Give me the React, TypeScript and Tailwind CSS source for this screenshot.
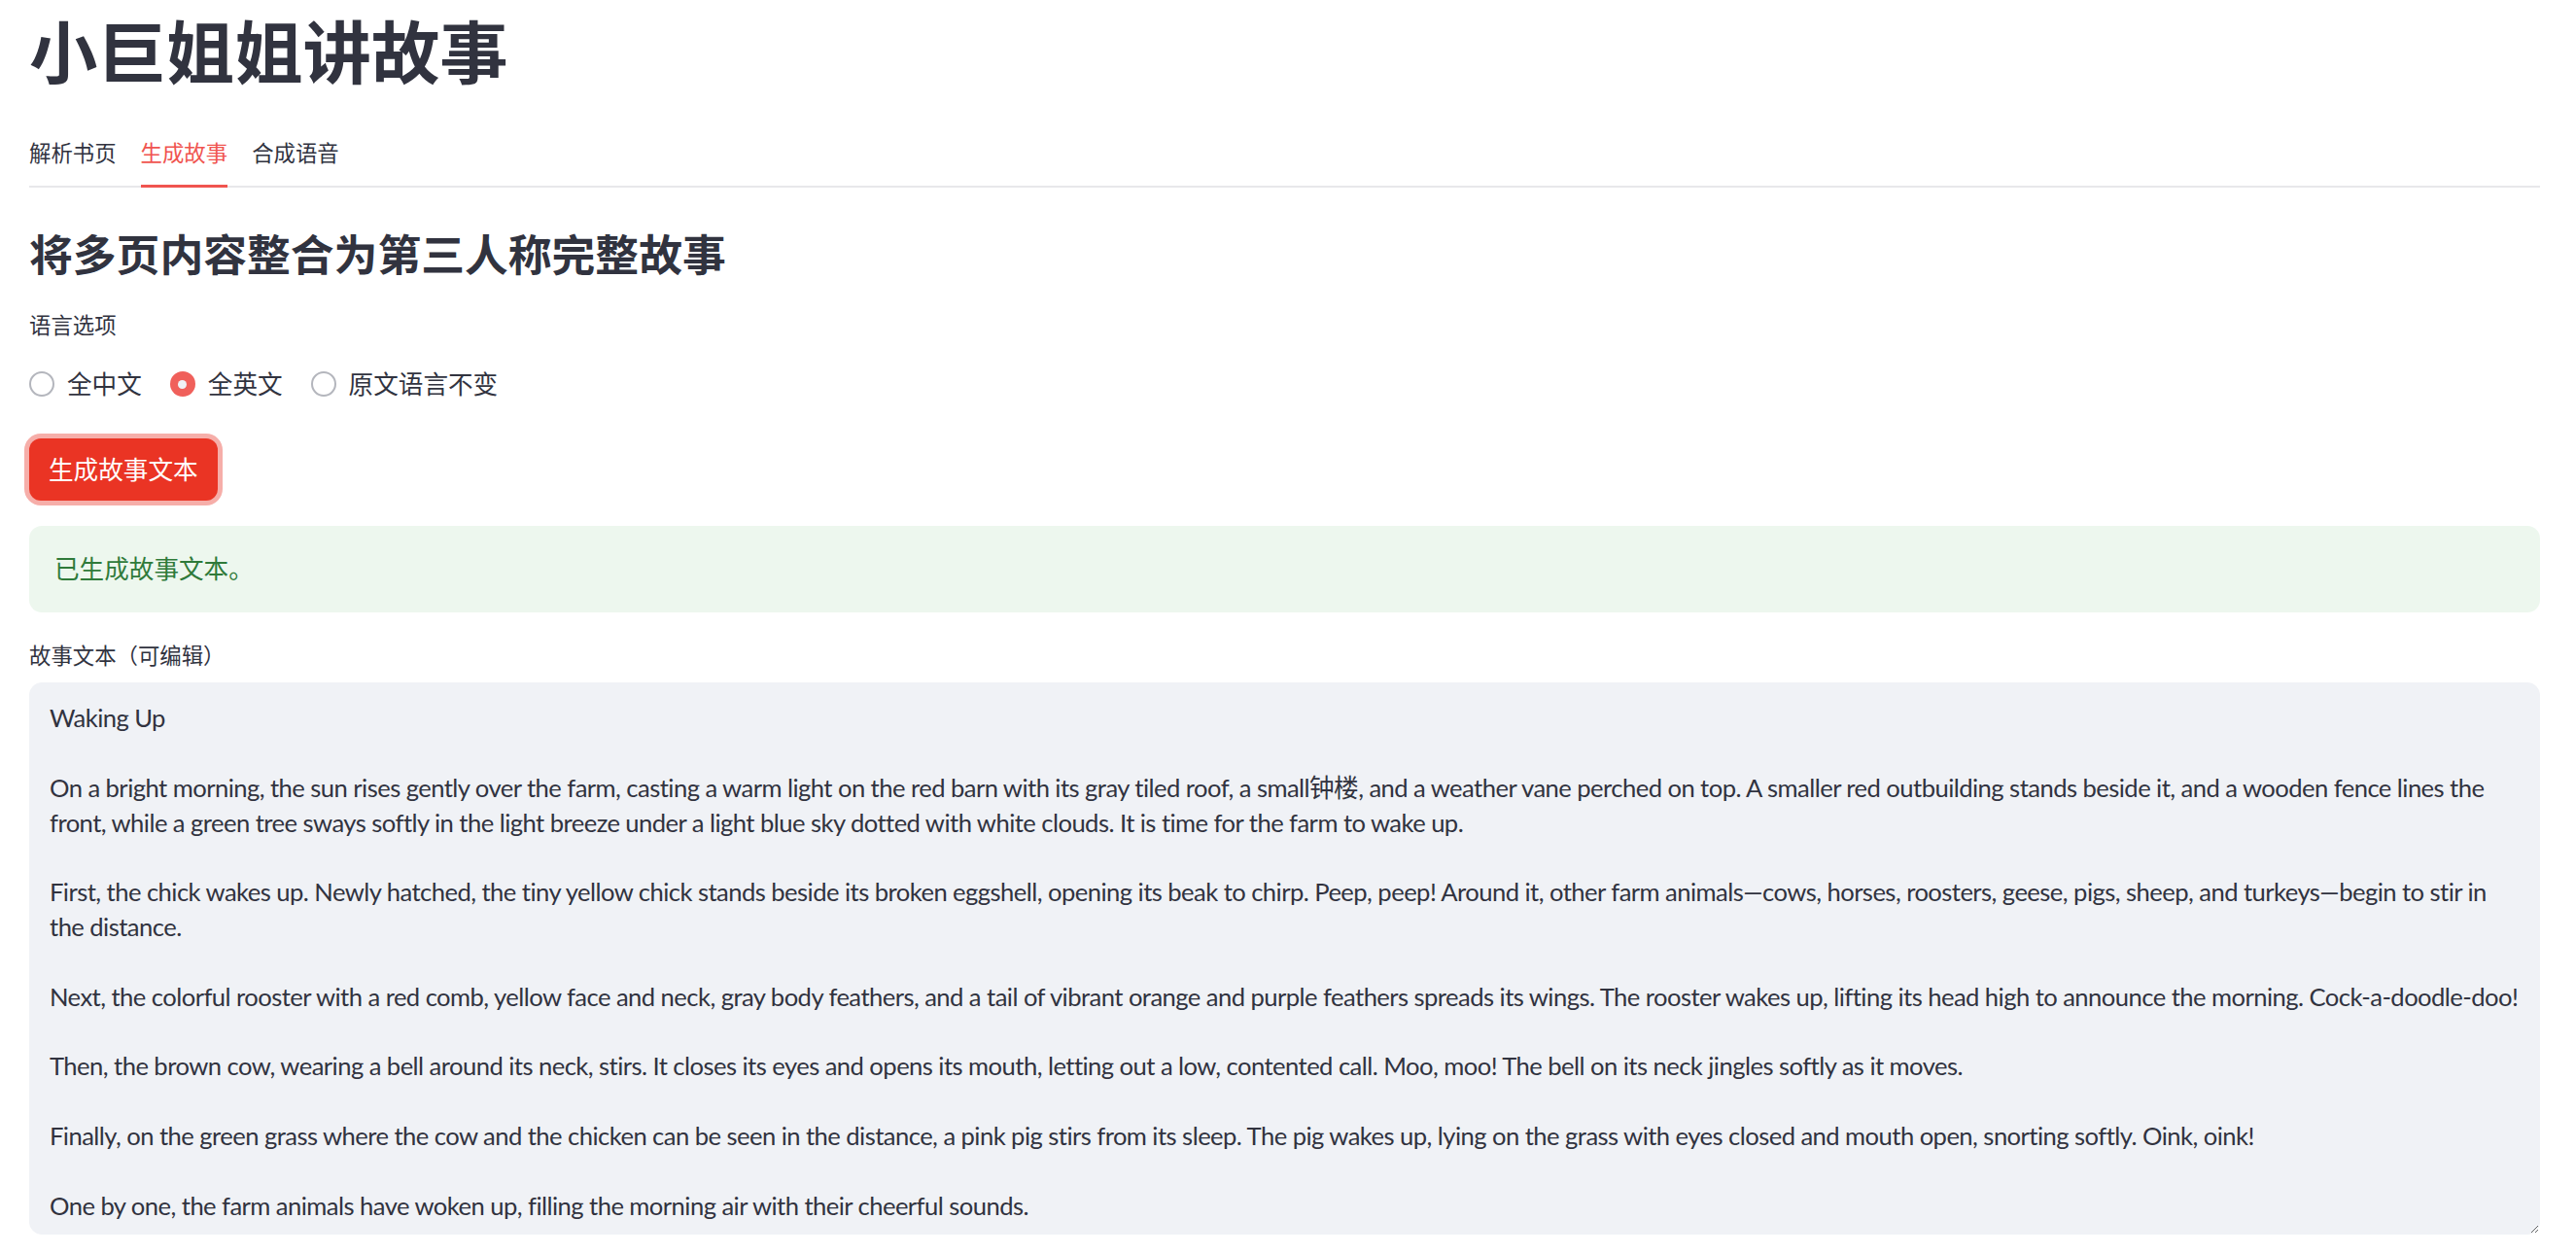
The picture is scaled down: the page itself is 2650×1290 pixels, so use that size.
import { useState } from 'react';

const storyLines = [
  'Waking Up',
  '',
  'On a bright morning, the sun rises gently over the farm, casting a warm light on the red barn with its gray tiled roof, a small钟楼, and a weather vane perched on top. A smaller red outbuilding stands beside it, and a wooden fence lines the',
  'front, while a green tree sways softly in the light breeze under a light blue sky dotted with white clouds. It is time for the farm to wake up.',
  '',
  'First, the chick wakes up. Newly hatched, the tiny yellow chick stands beside its broken eggshell, opening its beak to chirp. Peep, peep! Around it, other farm animals—cows, horses, roosters, geese, pigs, sheep, and turkeys—begin to stir in',
  'the distance.',
  '',
  'Next, the colorful rooster with a red comb, yellow face and neck, gray body feathers, and a tail of vibrant orange and purple feathers spreads its wings. The rooster wakes up, lifting its head high to announce the morning. Cock-a-doodle-doo!',
  '',
  'Then, the brown cow, wearing a bell around its neck, stirs. It closes its eyes and opens its mouth, letting out a low, contented call. Moo, moo! The bell on its neck jingles softly as it moves.',
  '',
  'Finally, on the green grass where the cow and the chicken can be seen in the distance, a pink pig stirs from its sleep. The pig wakes up, lying on the grass with eyes closed and mouth open, snorting softly. Oink, oink!',
  '',
  'One by one, the farm animals have woken up, filling the morning air with their cheerful sounds.',
];

const tabs = ['解析书页', '生成故事', '合成语音'];
const languages = ['全中文', '全英文', '原文语言不变'];

export default function App() {
  const [tab, setTab] = useState(1);
  const [lang, setLang] = useState(1);
  const [story, setStory] = useState(storyLines.join('\n'));

  return (
    <div className="min-h-screen bg-white pl-[30px] pr-[37px] pt-[12px] text-[#31333F] font-['Lato','Noto_Sans_CJK_SC',sans-serif]">
      <h1 className="h-[84px] text-[70.4px] leading-[84px] font-bold">小巨姐姐讲故事</h1>

      <div className="mt-[46px] flex gap-[25px] shadow-[inset_0_-2px_0_#E8E8EA]">
        {tabs.map((t, i) => (
          <button
            key={t}
            onClick={() => setTab(i)}
            className={`border-b-[3px] pb-[16px] text-[22.4px] leading-[32px] ${
              i === tab ? 'border-[#F0544F] text-[#F0544F]' : 'border-transparent text-[#31333F]'
            }`}
          >
            {t}
          </button>
        ))}
      </div>

      <h3 className="mt-[42px] text-[44.8px] leading-[54px] font-semibold">将多页内容整合为第三人称完整故事</h3>

      <div className="mt-[30px] text-[22.4px] leading-[32px]">语言选项</div>
      <div className="mt-[26px] flex h-[36px] items-center gap-[29px]">
        {languages.map((l, i) => (
          <label key={l} onClick={() => setLang(i)} className="flex cursor-pointer items-center gap-[13px] text-[25.6px]">
            {i === lang ? (
              <span className="flex h-[26px] w-[26px] items-center justify-center rounded-full bg-[#F0605B]">
                <span className="h-[9px] w-[9px] rounded-full bg-[#F0F2F6]" />
              </span>
            ) : (
              <span className="h-[26px] w-[26px] rounded-full border-2 border-[#B4B6BD] bg-white" />
            )}
            {l}
          </label>
        ))}
      </div>

      <button className="mt-[38px] h-[64px] rounded-[12px] bg-[#EA3424] px-[20px] text-[25.6px] text-white ring-[5px] ring-[#F6AEA9]">
        生成故事文本
      </button>

      <div className="mt-[26px] flex h-[89px] items-center rounded-[13px] bg-[#EDF7EE] px-[26px] text-[25.6px] text-[#2F7A3A]">
        已生成故事文本。
      </div>

      <div className="mt-[29px] text-[22.4px] leading-[32px]">故事文本（可编辑）</div>
      <textarea
        value={story}
        onChange={(e) => setStory(e.target.value)}
        wrap="off"
        className="mt-[11px] block h-[568px] w-full resize-y overflow-hidden whitespace-pre rounded-[13px] border border-[#F0F2F6] bg-[#F0F2F6] px-[20px] pt-[18px] text-[25.6px] leading-[35.84px] tracking-[-0.55px] text-[#31333F] outline-none"
      />
    </div>
  );
}
